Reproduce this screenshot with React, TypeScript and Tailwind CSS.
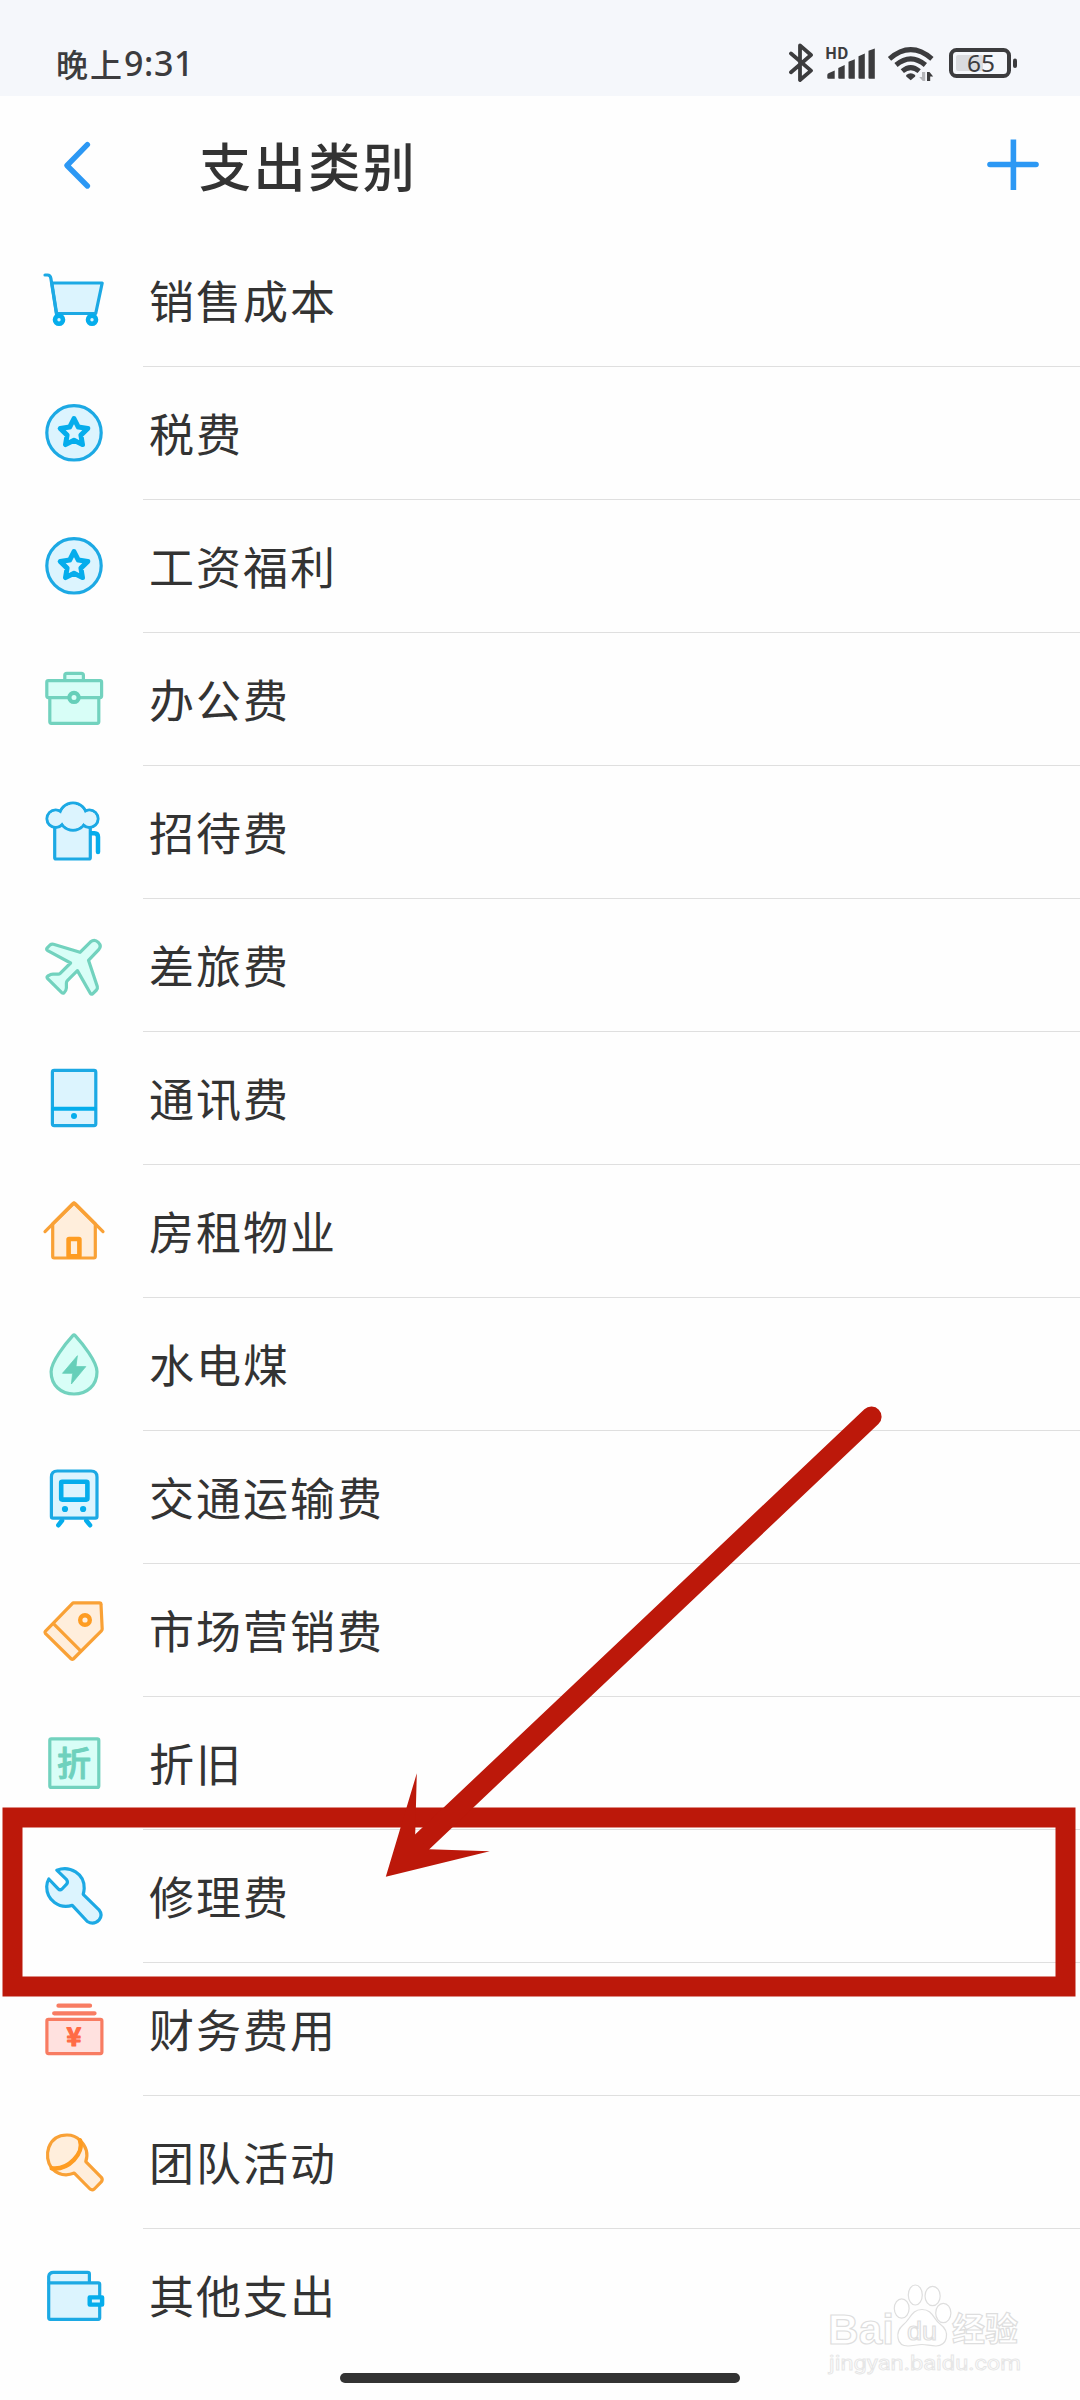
import React from "react";

const BLUE = { stroke: "#1ca9e4", fill: "#dcf4fe" };
const GREEN = { stroke: "#72d2be", fill: "#d8fef7" };
const ORANGE = { stroke: "#f9a136", fill: "#ffeedc" };
const RED = { stroke: "#f87c62", fill: "#ffe1df" };

const FOAM = [
  { cx: 13.7, cy: 18.7, r: 8.7 },
  { cx: 47.3, cy: 18.7, r: 8.7 },
  { cx: 31, cy: 16.6, r: 13.6 },
];

const CartIcon = () => (
  <g {...BLUE}>
    <path d="M9.8 15H60.2L53.7 45.5H14.6Z" />
    <path d="M3 7H5.5Q8.4 7 8.9 10.5L14.6 47" fill="none" />
    <circle cx="17" cy="51.7" r="4" stroke="#05adec" strokeWidth="4.6" />
    <circle cx="50" cy="51.7" r="4" stroke="#05adec" strokeWidth="4.6" />
  </g>
);

const StarIcon = () => (
  <g {...BLUE}>
    <circle cx="32" cy="31.8" r="27.2" />
    <path
      d="M32 17.5L36.3 26.1L45.8 27.4L38.9 34.1L40.5 43.6L32 39.2L23.5 43.6L25.1 34.1L18.2 27.4L27.7 26.1Z"
      stroke="#05adec"
      strokeWidth="5"
    />
  </g>
);

const BriefcaseIcon = () => (
  <g {...GREEN}>
    <rect x="22.8" y="6.3" width="18.6" height="9" rx="2" />
    <rect x="7.8" y="26" width="49" height="30.3" rx="1.5" />
    <rect x="4.8" y="13.6" width="54.8" height="17" rx="1.5" />
    <circle cx="32" cy="30.4" r="4.6" strokeWidth="4.2" stroke="#66cfb9" />
  </g>
);

const BeerIcon = () => (
  <g {...BLUE}>
    <rect x="12.7" y="22" width="35.6" height="37" rx="1.2" />
    <path d="M49.7 33.2H52.5Q56 33.2 56 37V52" fill="none" stroke="#05adec" strokeWidth="4.5" />
    {FOAM.map((c) => (
      <circle key={c.cx} {...c} />
    ))}
    {FOAM.map((c) => (
      <circle key={c.cx} cx={c.cx} cy={c.cy} r={c.r - 1.4} stroke="none" />
    ))}
  </g>
);

const PlaneIcon = () => (
  <path
    {...GREEN}
    d="M38 19.3L48.6 8.8Q52.5 5.6 56.3 9.3Q60 13 56.7 16.6L46.5 27.3L55.3 53.5Q55.8 55.6 54.5 57L50.6 60.8Q49.3 61.6 48.3 60.2L35.4 37.6L25.6 47.3Q24.4 48.5 24.4 50V55Q24.2 58 22 59.9Q20.8 60.6 19.5 59.4L5.4 45.3Q4.4 44 5.8 43L8.5 41.6Q10 41 12 41.2H16.2Q17.3 41.2 18.2 40.3L28.6 30L5.7 17.6Q4 16.6 5 15.2L8 12Q9.5 10.8 11.5 11.3Z"
  />
);

const TabletIcon = () => (
  <g {...BLUE}>
    <rect x="10.4" y="4.4" width="43.4" height="55.2" rx="1.8" />
    <path d="M11 42.7H53" stroke="#05adec" strokeWidth="4" />
    <circle cx="32" cy="50.1" r="3" fill="#05adec" stroke="none" />
  </g>
);

const HouseIcon = () => (
  <g {...ORANGE}>
    <path d="M10.7 25L32 4L53.3 25V57.6Q53.3 59 51.8 59H12.2Q10.7 59 10.7 57.6Z" />
    <path d="M3 32.6L30.5 5Q32 3.6 33.5 5L61 32.6" fill="none" />
    <rect x="26.6" y="40" width="10.8" height="17.4" rx="0.5" stroke="#fe9c22" strokeWidth="4.6" />
  </g>
);

const DropIcon = () => (
  <g {...GREEN}>
    <path d="M30.8 3.6Q32 2.4 33.2 3.6C40 11 55 29.5 55 39.7C55 53.5 45 62 32 62S9.1 53.5 9.1 39.7C9.1 29.5 24 11 30.8 3.6Z" />
    <path d="M35.2 24L20.5 41.3H30.6L29.4 52L43.8 34.6H34.2Z" fill="#66cfb9" stroke="#66cfb9" strokeWidth="0.8" />
  </g>
);

const TrainIcon = () => (
  <g {...BLUE}>
    <path d="M20 55.5L16.4 60.2M44.3 55.5L48 60.2" stroke="#05adec" strokeWidth="4.6" />
    <path d="M15.4 6H49Q55 6 55 12V51.6Q55 53.2 53.4 53.2H11Q9.4 53.2 9.4 51.6V12Q9.4 6 15.4 6Z" />
    <rect x="19.2" y="16.8" width="26.2" height="17.8" rx="1" stroke="#05adec" strokeWidth="4.6" />
    <circle cx="23" cy="44" r="3.1" fill="#05adec" stroke="none" />
    <circle cx="41.1" cy="44" r="3.1" fill="#05adec" stroke="none" />
  </g>
);

const TagIcon = () => (
  <g {...ORANGE}>
    <path d="M31 4.8H57.5Q59 4.8 59 6.4L60.2 31Q60.2 32 59.4 32.8L31.3 61Q30.3 61.8 29.3 61L3.3 35.4Q2.4 34.3 3.3 33.3Z" />
    <path d="M11.7 25.8L38.4 52.6" />
    <circle cx="43" cy="22" r="4.8" stroke="#fe9c22" strokeWidth="4.4" />
  </g>
);

const DepreciationIcon = () => (
  <g {...GREEN}>
    <rect x="7.8" y="7.8" width="49" height="48.6" rx="1.5" />
    <text
      x="32"
      y="45.3"
      textAnchor="middle"
      fontSize="34"
      fontWeight="500"
      fill="#6fd1bd"
      stroke="#6fd1bd"
      strokeWidth="0.9"
    >
      折
    </text>
  </g>
);

const WrenchIcon = () => (
  <path
    {...BLUE}
    d="M14.8 6.2C28 1.2 42.6 9.6 42.2 24.5Q42 27.5 41.2 30.3L57 45.8Q61 51 57.2 55.8Q51.8 61.4 45.3 57.5L30.3 41.4C17 45.5 4.6 36 4.7 22.5Q4.9 18.2 6.8 15L16.2 24.8Q18 26.6 20 25L24.6 20.2Q26.3 18 24.6 15.6Z"
  />
);

const MoneyIcon = () => (
  <g {...RED}>
    <path d="M16.5 8.7H48M12.2 16.3H52.5" strokeWidth="4.3" />
    <rect x="4.9" y="22.4" width="55" height="34.2" rx="1.5" />
    <text
      x="32"
      y="48.5"
      textAnchor="middle"
      fontSize="25"
      fontWeight="700"
      fill="#ff6b45"
      stroke="#ff6b45"
      strokeWidth="1.2"
    >
      ¥
    </text>
  </g>
);

const MicIcon = () => (
  <g {...ORANGE}>
    <path d="M38 10.3C43.5 15.5 46.5 23 43.8 31.6L59.3 47.3Q61 49.4 59.5 51.6L52.3 59Q50.2 60.6 48 59L32.3 43.1C25 46 16.5 45 9.7 38.3Z" />
    <path d="M9.7 38.3C1 27 5.5 5 25 5Q33 5 38 10.3C42.5 23 26.5 40.5 9.7 38.3Z" />
    <path d="M38 10.3C42.5 23 26.5 40.5 9.7 38.3" fill="none" stroke="#fe9c22" strokeWidth="4.4" />
  </g>
);

const WalletIcon = () => (
  <g {...BLUE}>
    <path d="M6.7 20V13.4Q7.2 9.3 11.4 9.3H45.6Q47.4 9.3 47.4 11V20" />
    <rect x="6.7" y="19.8" width="51" height="36.5" rx="1.5" />
    <rect x="47.7" y="34.4" width="12.4" height="7.2" stroke="#05adec" strokeWidth="4.4" />
  </g>
);

const categories = [
  { name: "销售成本", Icon: CartIcon },
  { name: "税费", Icon: StarIcon },
  { name: "工资福利", Icon: StarIcon },
  { name: "办公费", Icon: BriefcaseIcon },
  { name: "招待费", Icon: BeerIcon },
  { name: "差旅费", Icon: PlaneIcon },
  { name: "通讯费", Icon: TabletIcon },
  { name: "房租物业", Icon: HouseIcon },
  { name: "水电煤", Icon: DropIcon },
  { name: "交通运输费", Icon: TrainIcon },
  { name: "市场营销费", Icon: TagIcon },
  { name: "折旧", Icon: DepreciationIcon },
  { name: "修理费", Icon: WrenchIcon },
  { name: "财务费用", Icon: MoneyIcon },
  { name: "团队活动", Icon: MicIcon },
  { name: "其他支出", Icon: WalletIcon },
];

const StatusBar = () => (
  <div className="flex h-24 items-start justify-between bg-[#f5f7fb] pl-14 pr-[63px] text-[#3c3c3e]">
    <div className="mt-[39px] flex items-center leading-[48px]">
      <span className="text-[32px] font-medium tracking-[2px]">晚上</span>
      <span className="text-[34px] font-medium tracking-[0.6px] font-['Noto_Sans','Noto_Sans_CJK_SC',sans-serif]">
        9:31
      </span>
    </div>
    <div className="mt-[42px] flex">
      <svg width="28" height="40" fill="none" stroke="currentColor" strokeWidth="3.8" strokeLinecap="round" strokeLinejoin="round">
        <path d="M3 11.5L23 28.6L12 38V3.4L23 13L3 30.2" />
      </svg>
      <svg width="52" height="40" fill="currentColor" className="ml-2">
        <text x="1" y="17" fontSize="15.5" fontWeight="700" textLength="23.5" lengthAdjust="spacingAndGlyphs">
          HD
        </text>
        <path d="M3.3 33Q3.3 31.5 5 31L10.7 28.6V36.7H4.3Q3.3 36.7 3.3 35.7ZM14.3 26L20.7 23V36.7H15.3Q14.3 36.7 14.3 35.7ZM24.5 19.8L30.8 17.3V36.7H25.5Q24.5 36.7 24.5 35.7ZM34.5 14.2L40.8 11.6V36.7H35.5Q34.5 36.7 34.5 35.7ZM44.5 8.8L50.8 6.4V36.7H45.5Q44.5 36.7 44.5 35.7Z" />
      </svg>
      <svg width="48" height="40" fill="none" stroke="currentColor" strokeWidth="5" className="ml-2.5">
        <path d="M3.5 16.8Q24.7 -1.6 45.9 16.8M10 23Q24.7 10.6 39.4 23M16.3 29.2Q24.7 22 33.2 29.2" />
        <path d="M20.2 33Q24.7 29.5 29.2 33V34.5L24.7 38.3L20.2 34.5Z" fill="currentColor" stroke="none" />
        <path d="M39.2 30V39H36.8L33.2 35H36V30Z" fill="#b5b6ba" stroke="none" />
        <path d="M41 39V30H43.5L47.2 34.4H44.2V39Z" fill="currentColor" stroke="none" />
      </svg>
      <svg width="68" height="40" fill="currentColor" className="ml-[15px]">
        <rect x="7" y="13" width="27" height="16" rx="2" fill="#dadbdf" />
        <rect x="2" y="8" width="58" height="26" rx="5.5" fill="none" stroke="currentColor" strokeWidth="4" />
        <rect x="64" y="16.5" width="4" height="9.5" rx="2" />
        <text x="18" y="29.6" fontSize="23" textLength="28" lengthAdjust="spacingAndGlyphs" className="font-['Noto_Sans',sans-serif]">
          65
        </text>
      </svg>
    </div>
  </div>
);

const Header = () => (
  <header className="flex h-[138px] items-center pl-[60px] pr-[41px]">
    <svg width="34" height="50" fill="none" stroke="#2c98f4" strokeWidth="5.4" strokeLinecap="round" strokeLinejoin="round">
      <path d="M27.4 4.7L7 25.5L27.4 46" />
    </svg>
    <h1 className="ml-[105px] flex-1 text-[52px] leading-[70px] font-medium tracking-[2.6px] text-[#333]">
      支出类别
    </h1>
    <svg width="52" height="52" fill="none" stroke="#2c98f4" strokeWidth="5.6">
      <path d="M3 25.5H49" strokeLinecap="round" />
      <path d="M26.4 0.5V51" />
    </svg>
  </header>
);

const Watermark = () => (
  <svg
    width="210"
    height="110"
    fill="#fff"
    stroke="#dedede"
    strokeWidth="1.2"
    className="absolute left-[820px] top-[2275px]"
  >
    <text x="8" y="69" fontSize="43" fontWeight="700" textLength="66" lengthAdjust="spacingAndGlyphs" className="font-['Liberation_Sans',sans-serif]">
      Bai
    </text>
    <ellipse cx="81.7" cy="33.5" rx="7.4" ry="9.6" />
    <ellipse cx="95.3" cy="20" rx="7" ry="10" />
    <ellipse cx="112.6" cy="21" rx="7.6" ry="9.6" />
    <ellipse cx="123.3" cy="38" rx="7.6" ry="9.6" />
    <path d="M102 34.5C113 34.5 113 44 120 49C131 57 127 71 116 71C110 71 107 69.5 102 69.5S93 71 88 71C76 71 75 57 83 50C91 44 91 34.5 102 34.5Z" />
    <text x="87" y="64.5" fontSize="26" textLength="30" lengthAdjust="spacingAndGlyphs" className="font-['Liberation_Sans',sans-serif]">
      du
    </text>
    <text x="132" y="66" fontSize="33" fontWeight="700" textLength="66">
      经验
    </text>
    <text x="9" y="95" fontSize="20.5" textLength="192" lengthAdjust="spacingAndGlyphs" stroke="#e6e6e6" strokeWidth="0.9" className="font-[Roboto,sans-serif]">
      jingyan.baidu.com
    </text>
  </svg>
);

// red box and arrow pointing at the repair row
const Highlight = () => (
  <svg width="1080" height="620" className="pointer-events-none absolute left-0 top-[1400px]">
    <rect x="12.5" y="417.5" width="1053" height="169" fill="none" stroke="#bc180a" strokeWidth="20" />
    <path d="M871.4 16.7L421 443" stroke="#bc180a" strokeWidth="20.4" strokeLinecap="round" />
    <path d="M385.8 476.7L416.8 373.3L415.2 434.7L429 449.3L489.8 451.3Z" fill="#bc180a" />
  </svg>
);

const App = () => {
  return (
    <div className="relative h-[2400px] w-[1080px] overflow-hidden bg-[#fefefe] font-['Noto_Sans_CJK_SC',sans-serif]">
      <StatusBar />
      <Header />
      <ul>
        {categories.map(({ name, Icon }, index) => (
          <li key={index} className="flex h-[133px] pl-[42px]">
            <svg
              width="64"
              height="64"
              strokeWidth="3.2"
              strokeLinecap="round"
              strokeLinejoin="round"
              className="mt-[34px] shrink-0"
            >
              <Icon />
            </svg>
            <div
              className={`ml-[37px] flex flex-1 items-center border-b pl-1.5 ${
                index < categories.length - 1 ? "border-[#dfdfdf]" : "border-transparent"
              }`}
            >
              <span className="text-[45px] leading-[60px] tracking-[2px] text-[#333]">{name}</span>
            </div>
          </li>
        ))}
      </ul>
      <div className="mx-auto mt-[11px] h-2.5 w-[400px] rounded-full bg-[#333]" />
      <Watermark />
      <Highlight />
    </div>
  );
};

export default App;
